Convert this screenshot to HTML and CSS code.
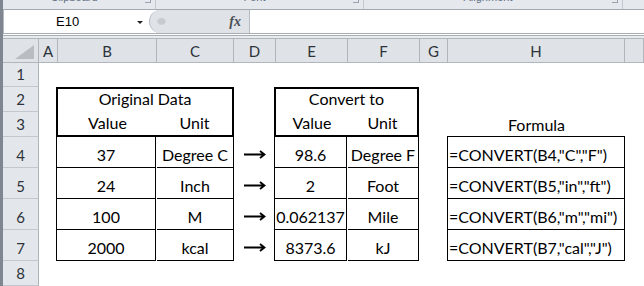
FILE: index.html
```html
<!DOCTYPE html>
<html lang="en">
<head>
    <meta charset="UTF-8">
    <title>Convert</title>
    <link rel="stylesheet" href="styles.css">
</head>
<body>
    <div class="window">

        <!-- ribbon group labels (cut off) -->
        <div class="ribbon">
            <div class="group g1"><span class="label">Clipboard</span><span class="launcher"></span></div>
            <div class="group g2"><span class="label">Font</span><span class="launcher"></span></div>
            <div class="group g3"><span class="label">Alignment</span><span class="launcher"></span></div>
        </div>

        <!-- formula bar -->
        <div class="formula-bar">
            <div class="name-box">
                <span class="name">E10</span>
                <span class="caret"></span>
            </div>
            <div class="fx-pill">
                <span class="grip"></span>
                <i class="fx">fx</i>
            </div>
            <div class="formula-input"></div>
        </div>
        <div class="bar-gap"></div>

        <!-- sheet -->
        <div class="sheet">
            <div class="row head">
                <div class="corner">
                    <svg width="19" height="14" viewBox="0 0 19 14"><polygon points="19,0 19,14 0,14" fill="#b9bdc2"/></svg>
                </div>
                <div class="col">A</div>
                <div class="col">B</div>
                <div class="col">C</div>
                <div class="col">D</div>
                <div class="col">E</div>
                <div class="col">F</div>
                <div class="col">G</div>
                <div class="col">H</div>
                <div class="col"></div>
            </div>

            <div class="row r1">
                <div class="num">1</div>
            </div>

            <div class="row r2">
                <div class="num">2</div>
                <div></div>
                <div class="cell title left-t">Original Data</div>
                <div></div>
                <div class="cell title right-t">Convert to</div>
            </div>

            <div class="row r3">
                <div class="num">3</div>
                <div></div>
                <div class="cell sub-l first">Value</div>
                <div class="cell sub-r">Unit</div>
                <div></div>
                <div class="cell sub-l first">Value</div>
                <div class="cell sub-r gap">Unit</div>
                <div></div>
                <div class="cell">Formula</div>
            </div>

            <div class="row">
                <div class="num">4</div>
                <div></div>
                <div class="cell line first gap">37</div>
                <div class="cell line">Degree C</div>
                <div class="cell arrow"><svg width="22" height="9" viewBox="0 0 22 9"><path d="M0 4.5H20.5M16 1L20.5 4.5L16 8" fill="none" stroke="#000" stroke-width="1.8"/></svg></div>
                <div class="cell line first gap">98.6</div>
                <div class="cell line gap">Degree F</div>
                <div></div>
                <div class="cell formula top">=CONVERT(B4,"C","F")</div>
            </div>

            <div class="row">
                <div class="num">5</div>
                <div></div>
                <div class="cell line first gap">24</div>
                <div class="cell line">Inch</div>
                <div class="cell arrow"><svg width="22" height="9" viewBox="0 0 22 9"><path d="M0 4.5H20.5M16 1L20.5 4.5L16 8" fill="none" stroke="#000" stroke-width="1.8"/></svg></div>
                <div class="cell line first gap">2</div>
                <div class="cell line gap">Foot</div>
                <div></div>
                <div class="cell formula">=CONVERT(B5,"in","ft")</div>
            </div>

            <div class="row">
                <div class="num">6</div>
                <div></div>
                <div class="cell line first gap">100</div>
                <div class="cell line">M</div>
                <div class="cell arrow"><svg width="22" height="9" viewBox="0 0 22 9"><path d="M0 4.5H20.5M16 1L20.5 4.5L16 8" fill="none" stroke="#000" stroke-width="1.8"/></svg></div>
                <div class="cell line first gap">0.062137</div>
                <div class="cell line gap">Mile</div>
                <div></div>
                <div class="cell formula">=CONVERT(B6,"m","mi")</div>
            </div>

            <div class="row">
                <div class="num">7</div>
                <div></div>
                <div class="cell line first gap">2000</div>
                <div class="cell line">kcal</div>
                <div class="cell arrow"><svg width="22" height="9" viewBox="0 0 22 9"><path d="M0 4.5H20.5M16 1L20.5 4.5L16 8" fill="none" stroke="#000" stroke-width="1.8"/></svg></div>
                <div class="cell line first gap">8373.6</div>
                <div class="cell line gap">kJ</div>
                <div></div>
                <div class="cell formula">=CONVERT(B7,"cal","J")</div>
            </div>

            <div class="row r8">
                <div class="num">8</div>
            </div>
        </div>
    </div>
</body>
</html>
```

FILE: styles.css
```css
* {
    padding: 0;
    margin: 0;
    box-sizing: border-box;
}

body {
    width: 644px;
    height: 286px;
    overflow: hidden;
    background-color: white;
    font-family: Lato, "Open Sans", sans-serif;
}

.window {
    height: 286px;
    border-left: 3px solid #80868f;
}

/* ribbon strip */

.ribbon {
    height: 10px;
    display: flex;
    background-color: #e5e9ee;
    border-bottom: 1px solid #a3a9b1;
    overflow: hidden;

    .group {
        display: flex;
        align-items: flex-start;
        border-right: 1px solid #c3c9d0;
    }

    .g1 { width: 153px; }
    .g2 { width: 208px; }
    .g3 { width: 259px; }

    .label {
        flex: 1;
        text-align: center;
        font-family: "Liberation Sans", sans-serif;
        font-size: 11px;
        line-height: 12px;
        color: #5f6d80;
        margin-top: -9px;
    }

    .launcher {
        width: 6px;
        height: 3px;
        margin-right: 4px;
        border-right: 1px solid #9aa3ad;
        border-bottom: 1px solid #9aa3ad;
    }
}

/* formula bar */

.formula-bar {
    height: 24px;
    display: flex;
    background-color: white;
    border-bottom: 1px solid #a9aeb5;

    .name-box {
        width: 146px;
        display: flex;
        align-items: center;
        border-left: 1px solid #b3b8bf;
        padding-left: 52px;
        font-family: "Liberation Sans", sans-serif;
        font-size: 13px;
        color: #000;

        .name {
            flex: 1;
        }

        .caret {
            width: 0;
            height: 0;
            margin-right: 6px;
            margin-top: 2px;
            border-left: 3px solid transparent;
            border-right: 3px solid transparent;
            border-top: 3px solid #222;
        }
    }

    .fx-pill {
        width: 101px;
        display: flex;
        align-items: center;
        justify-content: space-between;
        background-color: #dfe3e8;
        border: 1px solid #b5bbc3;
        border-top: none;
        border-bottom: none;
        border-radius: 12px 0 0 12px;
        padding: 0 8px 0 7px;

        .grip {
            width: 9px;
            height: 8px;
            border-radius: 50%;
            background-color: #c7cbd0;
            box-shadow: inset 0 -1px 1px #e9ebee;
        }

        .fx {
            font-family: "Liberation Serif", serif;
            font-size: 14px;
            font-weight: bold;
            color: #4a4f55;
        }
    }

    .formula-input {
        flex: 1;
    }
}

.bar-gap {
    height: 4px;
    background: linear-gradient(#ffffff 0 1px, #a9aeb5 1px 2px, #e9ecef 2px);
}

/* sheet */

.row {
    display: grid;
    grid-template-columns: 36px 19px 99px 77px 42px 72px 72px 28px 177px 1fr;
    height: 31px;
}

.head {
    height: 25px;
    background-color: #dfe3e8;
    border-top: 1px solid #b1b6bd;
    border-bottom: 1px solid #b1b6bd;

    .corner {
        display: flex;
        justify-content: flex-end;
        align-items: flex-end;
        padding: 0 4px 3px 0;
        border-right: 1px solid #b1b6bd;
    }

    .col {
        display: flex;
        justify-content: center;
        align-items: center;
        border-right: 1px solid #b1b6bd;
        font-size: 15px;
        color: #2d333a;
    }
}

.r1 { height: 24px; }
.r2, .r3, .r8 { height: 25px; }

.num {
    display: flex;
    justify-content: center;
    align-items: flex-end;
    padding-bottom: 3px;
    background-color: #e3e6ea;
    border-right: 1px solid #aeb3ba;
    border-bottom: 1px solid #c3c7cd;
    font-size: 15px;
    color: #2d333a;
}

.cell {
    display: flex;
    justify-content: center;
    align-items: flex-end;
    padding-bottom: 3px;
    font-size: 16px;
    line-height: 18px;
    color: #000;
    white-space: nowrap;
}

.title {
    grid-column: span 2;
    border: 2px solid #000;
    border-bottom: none;
    padding-bottom: 4px;
}

.left-t { margin-left: -2px; }
.right-t { margin-left: -2px; margin-right: 1px; }

.sub-l {
    border-left: 2px solid #000;
    border-bottom: 2px solid #000;
}

.sub-r {
    border-right: 2px solid #000;
    border-bottom: 2px solid #000;
}

.first { margin-left: -2px; }
.gap { margin-right: 1px; }

.line {
    border-right: 1px solid #000;
    border-bottom: 1px solid #000;
}

.line.first {
    border-left: 1px solid #000;
}

.arrow {
    padding-bottom: 9px;
}

.formula {
    justify-content: flex-start;
    margin-left: -1px;
    padding-left: 1px;
    border: 1px solid #000;
    border-top: none;
}

.formula.top {
    margin-top: -1px;
    border-top: 1px solid #000;
}
```
